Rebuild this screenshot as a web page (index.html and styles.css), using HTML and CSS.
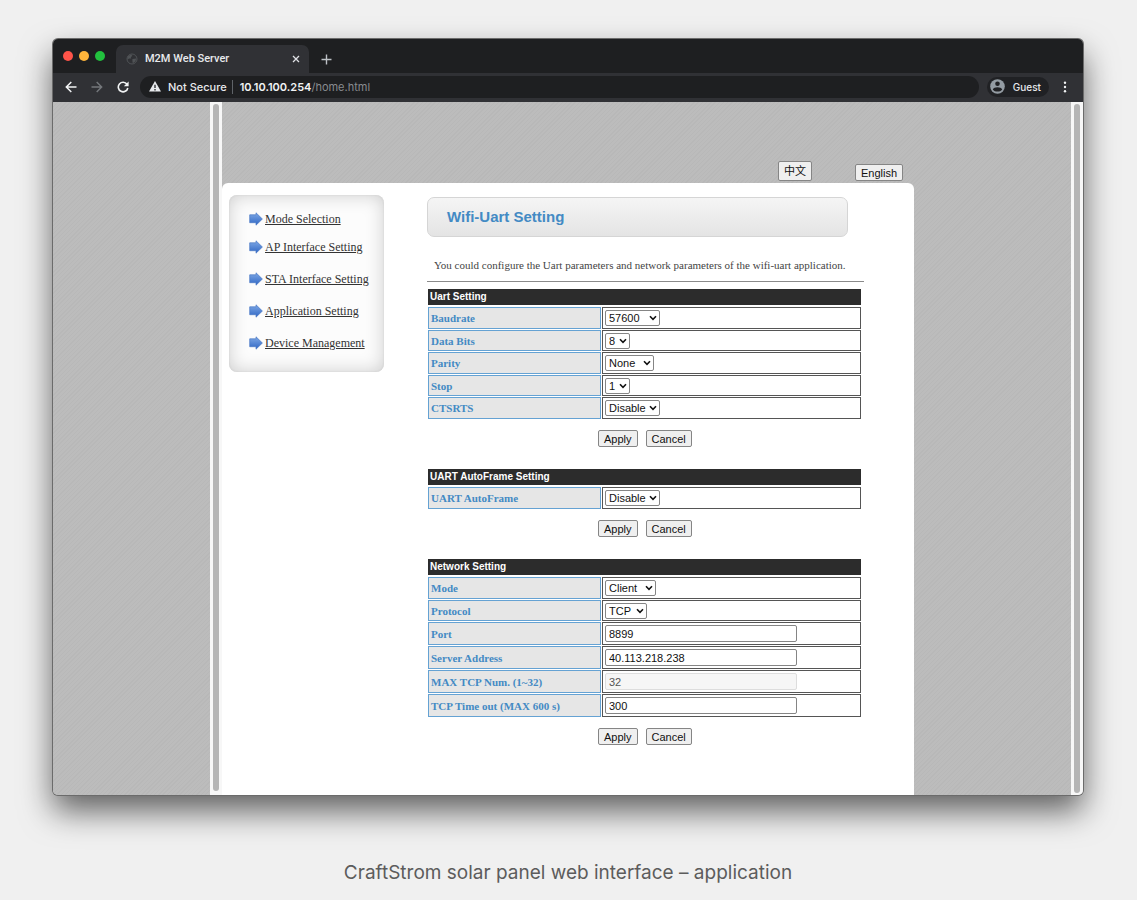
FILE: index.html
```html
<!DOCTYPE html>
<html lang="en">
<head>
<meta charset="utf-8">
<title>CraftStrom solar panel web interface</title>
<link rel="stylesheet" href="styles.css">
</head>
<body>
<svg class="defs" width="0" height="0" aria-hidden="true">
  <defs>
    <linearGradient id="blue" x1="0" y1="0" x2="0" y2="1">
      <stop offset="0" stop-color="#7fa9e6"/><stop offset="1" stop-color="#2f66c4"/>
    </linearGradient>
    <symbol id="arrow" viewBox="0 0 14 14"><path d="M.7 2.8H7V.8L13.4 7 7 13.2v-2.500H.7z" fill="url(#blue)" stroke="#4a78c4" stroke-width=".7"/></symbol>
    <symbol id="chevron" viewBox="0 0 8 6"><path d="M1 1.300 4 4.300 7 1.300" fill="none" stroke="#111" stroke-width="1.600"/></symbol>
  </defs>
</svg>
<figure class="figure">
  <div class="window">
    <header class="tabbar">
      <div class="lights"><i class="red"></i><i class="amber"></i><i class="green"></i></div>
      <div class="tab">
        <svg width="12" height="12" viewBox="0 0 12 12"><circle cx="6" cy="6" r="5" fill="none" stroke="#505356"/><path d="M2 3.2 5 1.4l1.4 1.3-1.6 1.5.4 1.4H3.2L1.3 6.4zM6.4 6l3.8-.6-.8 3.2-2.6 1.6-.4-2z" fill="#505356"/></svg>
        <span class="tab-title">M2M Web Server</span>
        <button class="bare" aria-label="Close tab"><svg width="8" height="8" viewBox="0 0 8 8"><path d="M1 1l6 6M7 1 1 7" stroke="#dfe1e5" stroke-width="1.3"/></svg></button>
      </div>
      <button class="bare plus" aria-label="New tab"><svg width="11" height="11" viewBox="0 0 11 11"><path d="M5.5 .5v10M.5 5.5h10" stroke="#bdc1c6" stroke-width="1.4"/></svg></button>
    </header>
    <nav class="toolbar" aria-label="Browser">
      <button class="bare" aria-label="Back"><svg width="12" height="12" viewBox="0 0 12 12"><path d="M11.5 6H1.5M6.3 1 1.3 6l5 5" fill="none" stroke="#f1f3f4" stroke-width="1.5"/></svg></button>
      <button class="bare" aria-label="Forward"><svg width="12" height="12" viewBox="0 0 12 12"><path d="M.5 6h10M5.7 1l5 5-5 5" fill="none" stroke="#74777b" stroke-width="1.4"/></svg></button>
      <button class="bare" aria-label="Reload"><svg width="12" height="12" viewBox="0 0 12 12"><path d="M10 3.2A4.8 4.8 0 1 0 10.8 7" fill="none" stroke="#f1f3f4" stroke-width="1.6"/><path d="M11.6.5v4.8H6.8z" fill="#f1f3f4"/></svg></button>
      <div class="address">
        <svg width="12" height="11" viewBox="0 0 12 11"><path d="M6 0l6 10.6H0z" fill="#e8eaed"/><path d="M6 3.8v3.3M6 8v1.4" stroke="#202124" stroke-width="1.3"/></svg>
        <span class="secure">Not Secure</span>
        <span class="url"><b>10.10.100.254</b>/home.html</span>
      </div>
      <button class="guest"><svg width="15" height="15" viewBox="0 0 15 15"><circle cx="7.5" cy="7.5" r="7.3" fill="#949ca3"/><circle cx="7.5" cy="4.8" r="2.3" fill="#202124"/><path d="M2.8 10.4c1-3 8.4-3 9.4 0-2.2 2.9-7.2 2.9-9.4 0z" fill="#202124"/></svg>Guest</button>
      <button class="bare" aria-label="Menu"><svg width="4" height="12" viewBox="0 0 4 12"><g fill="#f1f3f4"><circle cx="2" cy="1.7" r="1.2"/><circle cx="2" cy="6" r="1.2"/><circle cx="2" cy="10.3" r="1.2"/></g></svg></button>
    </nav>
    <div class="viewport">
      <div class="scroll left-scroll"></div>
      <main class="main">
        <div class="languages"><button class="btn chinese" lang="zh">中文</button><button class="btn">English</button></div>
        <div class="card">
          <ul class="menu">
            <li><svg width="14" height="14"><use href="#arrow"/></svg><a href="#">Mode Selection</a></li>
            <li><svg width="14" height="14"><use href="#arrow"/></svg><a href="#">AP Interface Setting</a></li>
            <li><svg width="14" height="14"><use href="#arrow"/></svg><a href="#">STA Interface Setting</a></li>
            <li><svg width="14" height="14"><use href="#arrow"/></svg><a href="#">Application Setting</a></li>
            <li><svg width="14" height="14"><use href="#arrow"/></svg><a href="#">Device Management</a></li>
          </ul>
          <section class="settings">
            <h1>Wifi-Uart Setting</h1>
            <p class="intro">You could configure the Uart parameters and network parameters of the wifi-uart application.</p>
            <form>
              <table>
                <colgroup><col class="name-col"><col></colgroup>
                <thead><tr><th colspan="2">Uart Setting</th></tr></thead>
                <tbody>
                  <tr><td class="name"><label for="baud">Baudrate</label></td><td><span class="pick w55"><select id="baud"><option>57600</option></select><svg width="8" height="6"><use href="#chevron"/></svg></span></td></tr>
                  <tr><td class="name"><label for="bits">Data Bits</label></td><td><span class="pick w25"><select id="bits"><option>8</option></select><svg width="8" height="6"><use href="#chevron"/></svg></span></td></tr>
                  <tr><td class="name"><label for="parity">Parity</label></td><td><span class="pick w49"><select id="parity"><option>None</option></select><svg width="8" height="6"><use href="#chevron"/></svg></span></td></tr>
                  <tr><td class="name"><label for="stop">Stop</label></td><td><span class="pick w25"><select id="stop"><option>1</option></select><svg width="8" height="6"><use href="#chevron"/></svg></span></td></tr>
                  <tr><td class="name"><label for="cts">CTSRTS</label></td><td><span class="pick w55"><select id="cts"><option>Disable</option></select><svg width="8" height="6"><use href="#chevron"/></svg></span></td></tr>
                </tbody>
              </table>
              <div class="actions"><button type="button" class="btn">Apply</button><button type="button" class="btn">Cancel</button></div>
            </form>
            <form>
              <table>
                <colgroup><col class="name-col"><col></colgroup>
                <thead><tr><th colspan="2">UART AutoFrame Setting</th></tr></thead>
                <tbody>
                  <tr><td class="name"><label for="frame">UART AutoFrame</label></td><td><span class="pick w55"><select id="frame"><option>Disable</option></select><svg width="8" height="6"><use href="#chevron"/></svg></span></td></tr>
                </tbody>
              </table>
              <div class="actions"><button type="button" class="btn">Apply</button><button type="button" class="btn">Cancel</button></div>
            </form>
            <form>
              <table>
                <colgroup><col class="name-col"><col></colgroup>
                <thead><tr><th colspan="2">Network Setting</th></tr></thead>
                <tbody>
                  <tr><td class="name"><label for="mode">Mode</label></td><td><span class="pick w51"><select id="mode"><option>Client</option></select><svg width="8" height="6"><use href="#chevron"/></svg></span></td></tr>
                  <tr><td class="name"><label for="proto">Protocol</label></td><td><span class="pick w42"><select id="proto"><option>TCP</option></select><svg width="8" height="6"><use href="#chevron"/></svg></span></td></tr>
                  <tr class="tall"><td class="name"><label for="port">Port</label></td><td><input id="port" type="text" value="8899"></td></tr>
                  <tr class="tall"><td class="name"><label for="server">Server Address</label></td><td><input id="server" type="text" value="40.113.218.238"></td></tr>
                  <tr class="tall"><td class="name"><label for="max">MAX TCP Num. (1~32)</label></td><td><input id="max" type="text" value="32" disabled></td></tr>
                  <tr class="tall"><td class="name"><label for="timeout">TCP Time out (MAX 600 s)</label></td><td><input id="timeout" type="text" value="300"></td></tr>
                </tbody>
              </table>
              <div class="actions"><button type="button" class="btn">Apply</button><button type="button" class="btn">Cancel</button></div>
            </form>
          </section>
        </div>
      </main>
      <div class="scroll"></div>
    </div>
  </div>
  <figcaption>CraftStrom solar panel web interface – application</figcaption>
</figure>
</body>
</html>
```
FILE: styles.css
```css
* { box-sizing: border-box; }
body { margin: 0; background: #f0f0f0; }
.defs { position: absolute; }
.figure { margin: 0; padding: 39px 54px 0 53px; }
.window {
  border-radius: 5px;
  overflow: hidden;
  background: #bababa;
  box-shadow: 0 0 0 1px #6b6b6b, 0 16px 32px rgba(0, 0, 0, .6);
  font-family: Inter, "Liberation Sans", sans-serif;
}
svg { display: block; flex: none; }
button { font-family: inherit; }
.bare { padding: 0; border: 0; background: none; }

/* Browser chrome */
.tabbar { display: flex; height: 34px; background: #1e1f21; }
.lights { display: flex; gap: 6px; padding: 12px 11px 0 10px; }
.lights i { width: 10px; height: 10px; border-radius: 50%; }
.red { background: #ff5449; }
.amber { background: #ffb53b; }
.green { background: #22c13e; }
.tab {
  display: flex;
  align-items: center;
  gap: 7px;
  width: 193px;
  margin-top: 6px;
  padding: 0 9px 0 10px;
  border-radius: 7px 7px 0 0;
  background: #303135;
}
.tab-title { flex: 1; color: #e8eaed; font: 500 11px/14px Roboto, sans-serif; }
.plus { padding: 6px 12px 0; }
.toolbar {
  display: flex;
  align-items: center;
  gap: 14px;
  height: 29px;
  padding: 0 16px 2px 12px;
  background: #303135;
}
.address {
  display: flex;
  flex: 1;
  align-items: center;
  height: 22px;
  margin-left: -3px;
  padding-left: 9px;
  border-radius: 11px;
  background: #1e1f21;
  color: #e8eaed;
  font-size: 11px;
}
.secure { margin: 0 7px 0 7px; padding-right: 5px; border-right: 1px solid #5f6368; font-weight: 500; }
.url { color: #888b8f; }
.url b { color: #f1f3f4; font-weight: 600; }
.guest {
  display: flex;
  align-items: center;
  gap: 8px;
  height: 20px;
  margin-left: -6px;
  padding: 0 8px 0 3px;
  border: 0;
  border-radius: 10px;
  background: #202124;
  color: #e8eaed;
  font-size: 10px;
  font-weight: 500;
}

/* Page inside the browser */
.viewport {
  display: flex;
  padding-left: 157px;
  background: #bababa repeating-linear-gradient(135deg, #b8b8b8 0 1px, #bcbcbc 1px 3px);
}
.scroll { display: flex; flex: none; width: 12px; padding: 2px 3px; background: #f7f7f7; }
.scroll::before { content: ""; flex: 1; border-radius: 3px; background: #b5b5b5; }
.left-scroll { padding-bottom: 4px; }
.main { flex: 1; }
.languages {
  display: flex;
  align-items: flex-end;
  justify-content: flex-end;
  gap: 43px;
  max-width: 692px;
  height: 81px;
  padding: 0 11px 2px 0;
}
.btn {
  height: 17px;
  padding: 0 5px;
  border: 1px solid #858585;
  border-radius: 2px;
  background: #efefef;
  color: #111;
  font: 11px/14px "Liberation Sans", "Noto Sans CJK SC", sans-serif;
}
.chinese { height: 20px; }
.card {
  display: flex;
  align-items: flex-start;
  gap: 43px;
  max-width: 692px;
  padding: 12px 50px 50px 7px;
  border-radius: 6px 6px 0 0;
  background: #fff;
}
.menu {
  width: 155px;
  margin: 0;
  padding: 12px 0 13px 20px;
  border-radius: 8px;
  background: #fcfcfc;
  box-shadow: inset 0 0 18px #ccc, inset 0 0 2px #ccc;
  list-style: none;
}
.menu li { display: flex; align-items: center; gap: 2px; height: 32px; }
.menu li:first-child { height: 24px; }
.menu a { color: #333; font: 12px/16px "Liberation Serif", serif; white-space: nowrap; }
.settings { flex: 1; min-width: 0; }
h1 {
  margin: 2px 16px 0 0;
  padding: 0 19px;
  border: 1px solid #d5d5d5;
  border-radius: 7px;
  background: linear-gradient(#f5f5f5, #e4e4e4);
  color: #438ac4;
  font: bold 15px/38px "Liberation Sans", sans-serif;
}
.intro {
  margin: 20px 0 7px;
  padding: 0 7px 7px;
  border-bottom: 1px solid #8a8a8a;
  color: #444;
  font: 11px/17px "Liberation Serif", serif;
}
form { margin: 0 2px 22px 0; }
form:last-child { margin-bottom: 0; }
table { width: 100%; margin-top: -1px; border-spacing: 1px; table-layout: fixed; }
.name-col { width: 173px; }
th {
  height: 17px;
  padding: 0 2px;
  border-bottom: 1px solid #fff;
  background: #2c2c2c;
  background-clip: padding-box;
  color: #fff;
  font: bold 10px/14px "Liberation Sans", sans-serif;
  text-align: left;
}
td { height: 22px; padding: 0 2px; border: 1px solid #555; }
tr:nth-child(even) td { height: 21px; }
tr.tall td { height: 23px; }
.name {
  border-color: #65a2d3;
  background: #e6e6e6;
  color: #438ac4;
  font: bold 11px/16px "Liberation Serif", serif;
}
.pick { display: grid; align-items: center; }
.pick > * { grid-area: 1 / 1; }
.pick svg { justify-self: end; margin-right: 3px; pointer-events: none; }
.w25 { width: 25px; }
.w42 { width: 42px; }
.w49 { width: 49px; }
.w51 { width: 51px; }
.w55 { width: 55px; }
select, input {
  display: block;
  height: 16px;
  margin: 0;
  border: 1px solid #858585;
  border-radius: 2px;
  background: #fff;
  color: #111;
  font: 11px/14px "Liberation Sans", sans-serif;
}
select { width: 100%; padding: 0 3px; appearance: none; }
input { width: 192px; height: 17px; padding: 0 3px; }
input:disabled { border-color: #ddd; background: #f6f6f6; color: #555; }
.actions { display: flex; gap: 8px; margin-top: 10px; padding-left: 171px; }

figcaption {
  margin-top: 65px;
  color: #5c5c5c;
  font: 19px/26px Inter, sans-serif;
  text-align: center;
}
```
